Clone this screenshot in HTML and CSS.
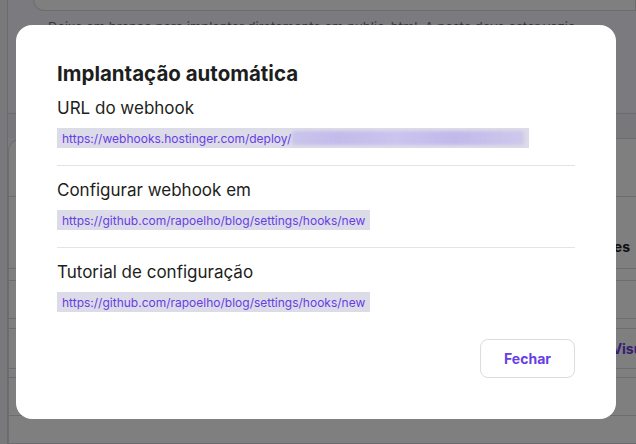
FILE: index.html
```html
<!DOCTYPE html>
<html lang="pt">
<head>
<meta charset="utf-8">
<link rel="stylesheet" href="styles.css">
</head>
<body>
<div class="page">
  <aside class="rail"></aside>
  <main class="main">
    <div class="top-card"></div>
    <p class="hint">Deixe em branco para implantar diretamente em public_html. A pasta deve estar vazia.</p>
    <div class="band"></div>
    <section class="bg-card">
      <div class="bg-row h58"></div>
      <div class="bg-row h72 end"><span class="bg-strong">Ações</span></div>
      <div class="bg-row h12"></div>
      <div class="bg-row h38"></div>
      <div class="bg-row h10"></div>
      <div class="bg-row h40 end"><span class="bg-link">Visualizar</span></div>
      <div class="bg-row h9"></div>
      <div class="bg-row h38"></div>
    </section>
  </main>
</div>

<div class="overlay">
  <div class="modal" role="dialog">
    <h2 class="modal-title">Implantação automática</h2>
    <div class="field">
      <div class="field-label">URL do webhook</div>
      <div class="code-row">
        <code class="code">https://webhooks.hostinger.com/deploy/<span class="blur"></span></code>
      </div>
    </div>
    <div class="field sep">
      <div class="field-label">Configurar webhook em</div>
      <div class="code-row"><code class="code">https://github.com/rapoelho/blog/settings/hooks/new</code></div>
    </div>
    <div class="field sep">
      <div class="field-label">Tutorial de configuração</div>
      <div class="code-row"><code class="code">https://github.com/rapoelho/blog/settings/hooks/new</code></div>
    </div>
    <div class="actions">
      <button class="btn">Fechar</button>
    </div>
  </div>
</div>
</body>
</html>
```

FILE: styles.css
```css
* { box-sizing: border-box; }
html, body { margin: 0; padding: 0; }
body {
  width: 636px;
  height: 444px;
  overflow: hidden;
  background: #f4f5ff;
  font-family: "Inter", "DejaVu Sans", sans-serif;
  color: #1d1e20;
}

/* background page */
.page { display: flex; height: 444px; }
.rail { width: 8px; flex: none; border-right: 1px solid #d5d5e0; background: #f2f3f6; }
.main { flex: 1; display: flex; flex-direction: column; min-width: 0; overflow: hidden; }
.top-card {
  height: 11px;
  flex: none;
  margin-left: 25px;
  border: 1px solid #d8d8e0;
  border-top: none;
  border-radius: 0 0 0 14px;
  background: #fff;
}
.hint {
  margin: 8px 0 0 40px;
  font-size: 13px;
  line-height: 16px;
  color: #6d7081;
  white-space: nowrap;
}
.band { height: 25px; flex: none; margin-top: 78px; border-top: 1px solid #d8d8e0; background: #f0f0f5; }
.bg-card {
  flex: 1;
  border: 1px solid #d8d8e0;
  border-right: none;
  border-radius: 14px 0 0 0;
  background: #fff;
}
.bg-row { border-bottom: 1px solid #dadae2; display: flex; align-items: center; padding-right: 6px; }
.bg-row.end { justify-content: flex-end; }
.h58 { height: 58px; }
.h72 { height: 72px; align-items: flex-end; padding-bottom: 13px; }
.h12 { height: 12px; }
.h38 { height: 38px; }
.h10 { height: 10px; }
.h40 { height: 40px; }
.h9 { height: 9px; }
.bg-strong { font-weight: 700; font-size: 14px; }
.bg-link { font-weight: 700; font-size: 14px; color: #673de6; margin-right: -50px; }

/* overlay + modal */
.overlay {
  position: fixed;
  inset: 0;
  background: rgba(0, 0, 0, 0.5);
  display: flex;
  align-items: center;
  justify-content: center;
  padding-right: 4px;
}
.modal {
  width: 600px;
  height: 394px;
  background: #fff;
  border-radius: 16px;
  padding: 37px 41px 41px;
  display: flex;
  flex-direction: column;
}
.modal-title {
  margin: 0;
  font-size: 20.5px;
  line-height: 24px;
  font-weight: 700;
  color: #1d1e20;
}
.field { display: flex; flex-direction: column; }
.field:first-of-type { margin-top: 10px; }
.field .field-label {
  font-size: 17px;
  line-height: 24px;
  color: #1d1e20;
}
.field.sep {
  margin-top: 17px;
  padding-top: 12px;
  border-top: 1px solid #e3e3e8;
}
.code-row { display: flex; margin-top: 8px; }
.code {
  display: flex;
  align-items: center;
  height: 20px;
  padding: 0 5px;
  background: #dcdbe8;
  color: #673de6;
  font-family: "Inter", "DejaVu Sans", sans-serif;
  font-size: 12px;
  white-space: nowrap;
}
.blur {
  display: inline-block;
  width: 232px;
  height: 14px;
  margin-left: 1px;
  border-radius: 3px;
  background: linear-gradient(90deg, rgba(190,182,236,0.6), #c3bbea 20%, #cbc4ee 45%, #c1b9ea 70%, rgba(200,193,236,0.7));
  filter: blur(1.5px);
}
.actions { margin-top: auto; display: flex; justify-content: flex-end; }
.btn {
  width: 95px;
  height: 39px;
  border: 1px solid #dadce0;
  border-radius: 8px;
  background: #fff;
  color: #673de6;
  font-family: "Inter", "DejaVu Sans", sans-serif;
  font-size: 14px;
  font-weight: 700;
}
```
